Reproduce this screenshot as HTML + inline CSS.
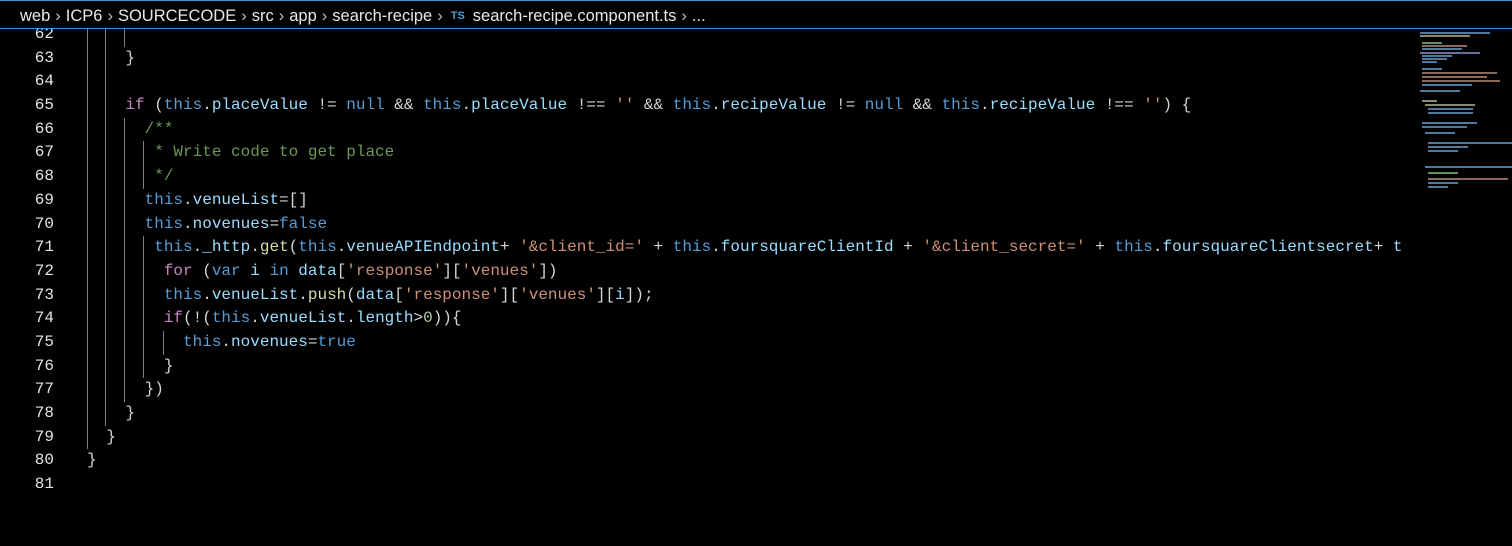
<!DOCTYPE html>
<html><head><meta charset="utf-8"><style>
html,body{margin:0;padding:0;background:#000;width:1512px;height:546px;overflow:hidden}
#bar{position:absolute;left:0;top:0;width:1512px;height:29px;background:#000;border-bottom:1px solid #3794d0;z-index:5;font-family:"Liberation Sans",sans-serif;font-size:16.5px;color:#e8e8e8;line-height:33px;white-space:nowrap;padding-left:20px;box-sizing:border-box}
#bar .t{position:absolute;top:0;left:0;width:1512px;height:1px;background:#3794d0}
#bar span.s{color:#c0c0c0;margin:0 5px}
#bar .ts{color:#4a9fe0;font-size:11px;font-weight:bold;margin:0 8px 0 3px;position:relative;top:-2px}
#code{position:absolute;left:0;top:23px;width:1405px;overflow:hidden;font-family:"Liberation Mono",monospace;font-size:16px;color:#d4d4d4}
.l{position:relative;height:23.7px;line-height:23.7px;white-space:pre}
.n{position:absolute;left:0;width:54px;text-align:right;color:#e4e4e4}
.c{position:absolute;left:87px}
.g{position:absolute;top:0;width:1px;height:23.7px;background:#808080}
.k{color:#569cd6}.p{color:#c586c0}.v{color:#9cdcfe}.f{color:#dcdcaa}.s{color:#ce9178}.m{color:#6a9955}.num{color:#b5cea8}
#mm{position:absolute;left:1410px;top:30px;width:102px;height:170px}
#mm div{position:absolute;height:1.5px}
</style></head><body>
<div id="bar"><div class="t"></div>web<span class="s">›</span>ICP6<span class="s">›</span>SOURCECODE<span class="s">›</span>src<span class="s">›</span>app<span class="s">›</span>search-recipe<span class="s">›</span><span class="ts">TS</span>search-recipe.component.ts<span class="s">›</span>...</div>
<div id="code">
<div class="l"><span class="n">62</span><span class="g" style="left:87px"></span><span class="g" style="left:105px"></span><span class="g" style="left:124px"></span></div>
<div class="l"><span class="n">63</span><span class="g" style="left:87px"></span><span class="g" style="left:105px"></span><span class="c">    }</span></div>
<div class="l"><span class="n">64</span><span class="g" style="left:87px"></span><span class="g" style="left:105px"></span></div>
<div class="l"><span class="n">65</span><span class="g" style="left:87px"></span><span class="g" style="left:105px"></span><span class="c">    <span class="p">if</span> (<span class="k">this</span>.<span class="v">placeValue</span> != <span class="k">null</span> &amp;&amp; <span class="k">this</span>.<span class="v">placeValue</span> !== <span class="s">''</span> &amp;&amp; <span class="k">this</span>.<span class="v">recipeValue</span> != <span class="k">null</span> &amp;&amp; <span class="k">this</span>.<span class="v">recipeValue</span> !== <span class="s">''</span>) {</span></div>
<div class="l"><span class="n">66</span><span class="g" style="left:87px"></span><span class="g" style="left:105px"></span><span class="g" style="left:124px"></span><span class="c m">      /**</span></div>
<div class="l"><span class="n">67</span><span class="g" style="left:87px"></span><span class="g" style="left:105px"></span><span class="g" style="left:124px"></span><span class="g" style="left:143px"></span><span class="c m">       * Write code to get place</span></div>
<div class="l"><span class="n">68</span><span class="g" style="left:87px"></span><span class="g" style="left:105px"></span><span class="g" style="left:124px"></span><span class="g" style="left:143px"></span><span class="c m">       */</span></div>
<div class="l"><span class="n">69</span><span class="g" style="left:87px"></span><span class="g" style="left:105px"></span><span class="g" style="left:124px"></span><span class="c">      <span class="k">this</span>.<span class="v">venueList</span>=[]</span></div>
<div class="l"><span class="n">70</span><span class="g" style="left:87px"></span><span class="g" style="left:105px"></span><span class="g" style="left:124px"></span><span class="c">      <span class="k">this</span>.<span class="v">novenues</span>=<span class="k">false</span></span></div>
<div class="l"><span class="n">71</span><span class="g" style="left:87px"></span><span class="g" style="left:105px"></span><span class="g" style="left:124px"></span><span class="g" style="left:143px"></span><span class="c">       <span class="k">this</span>.<span class="v">_http</span>.<span class="f">get</span>(<span class="k">this</span>.<span class="v">venueAPIEndpoint</span>+ <span class="s">'&amp;client_id='</span> + <span class="k">this</span>.<span class="v">foursquareClientId</span> + <span class="s">'&amp;client_secret='</span> + <span class="k">this</span>.<span class="v">foursquareClientsecret</span>+ <span class="v">t</span></span></div>
<div class="l"><span class="n">72</span><span class="g" style="left:87px"></span><span class="g" style="left:105px"></span><span class="g" style="left:124px"></span><span class="g" style="left:143px"></span><span class="c">        <span class="p">for</span> (<span class="k">var</span> <span class="v">i</span> <span class="k">in</span> <span class="v">data</span>[<span class="s">'response'</span>][<span class="s">'venues'</span>])</span></div>
<div class="l"><span class="n">73</span><span class="g" style="left:87px"></span><span class="g" style="left:105px"></span><span class="g" style="left:124px"></span><span class="g" style="left:143px"></span><span class="c">        <span class="k">this</span>.<span class="v">venueList</span>.<span class="f">push</span>(<span class="v">data</span>[<span class="s">'response'</span>][<span class="s">'venues'</span>][<span class="v">i</span>]);</span></div>
<div class="l"><span class="n">74</span><span class="g" style="left:87px"></span><span class="g" style="left:105px"></span><span class="g" style="left:124px"></span><span class="g" style="left:143px"></span><span class="c">        <span class="p">if</span>(!(<span class="k">this</span>.<span class="v">venueList</span>.<span class="v">length</span>&gt;<span class="num">0</span>)){</span></div>
<div class="l"><span class="n">75</span><span class="g" style="left:87px"></span><span class="g" style="left:105px"></span><span class="g" style="left:124px"></span><span class="g" style="left:143px"></span><span class="g" style="left:163px"></span><span class="c">          <span class="k">this</span>.<span class="v">novenues</span>=<span class="k">true</span></span></div>
<div class="l"><span class="n">76</span><span class="g" style="left:87px"></span><span class="g" style="left:105px"></span><span class="g" style="left:124px"></span><span class="g" style="left:143px"></span><span class="c">        }</span></div>
<div class="l"><span class="n">77</span><span class="g" style="left:87px"></span><span class="g" style="left:105px"></span><span class="g" style="left:124px"></span><span class="c">      })</span></div>
<div class="l"><span class="n">78</span><span class="g" style="left:87px"></span><span class="g" style="left:105px"></span><span class="c">    }</span></div>
<div class="l"><span class="n">79</span><span class="g" style="left:87px"></span><span class="c">  }</span></div>
<div class="l"><span class="n">80</span><span class="c">}</span></div>
<div class="l"><span class="n">81</span></div>
</div>
<div id="mm">
<div style="left:10px;top:2px;width:70px;background:#4f7aa0"></div>
<div style="left:10px;top:5px;width:50px;background:#8a8a70"></div>
<div style="left:12px;top:12px;width:20px;background:#5f8f60"></div>
<div style="left:12px;top:15px;width:45px;background:#8a6a5a"></div>
<div style="left:12px;top:18px;width:40px;background:#4f7aa0"></div>
<div style="left:10px;top:22px;width:60px;background:#6a7090"></div>
<div style="left:12px;top:25px;width:30px;background:#4f7aa0"></div>
<div style="left:12px;top:28px;width:25px;background:#4f7aa0"></div>
<div style="left:12px;top:31px;width:15px;background:#4f7aa0"></div>
<div style="left:12px;top:38px;width:20px;background:#4f7aa0"></div>
<div style="left:12px;top:42px;width:75px;background:#8a6a5a"></div>
<div style="left:12px;top:46px;width:65px;background:#8a6a5a"></div>
<div style="left:12px;top:50px;width:78px;background:#8a6a5a"></div>
<div style="left:12px;top:54px;width:50px;background:#4f7aa0"></div>
<div style="left:10px;top:60px;width:40px;background:#4f7aa0"></div>
<div style="left:12px;top:70px;width:15px;background:#8a8a70"></div>
<div style="left:15px;top:74px;width:50px;background:#8a8a70"></div>
<div style="left:18px;top:78px;width:45px;background:#4f7aa0"></div>
<div style="left:18px;top:82px;width:45px;background:#4f7aa0"></div>
<div style="left:12px;top:92px;width:55px;background:#4f7aa0"></div>
<div style="left:12px;top:96px;width:45px;background:#4f7aa0"></div>
<div style="left:15px;top:102px;width:30px;background:#4f7aa0"></div>
<div style="left:18px;top:112px;width:95px;background:#4f7aa0"></div>
<div style="left:18px;top:116px;width:40px;background:#4f7aa0"></div>
<div style="left:18px;top:120px;width:30px;background:#4f7aa0"></div>
<div style="left:15px;top:136px;width:95px;background:#4f7aa0"></div>
<div style="left:18px;top:142px;width:30px;background:#5f8f60"></div>
<div style="left:18px;top:148px;width:80px;background:#8a6a5a"></div>
<div style="left:18px;top:152px;width:30px;background:#4f7aa0"></div>
<div style="left:18px;top:156px;width:20px;background:#4f7aa0"></div>
</div>
</body></html>
